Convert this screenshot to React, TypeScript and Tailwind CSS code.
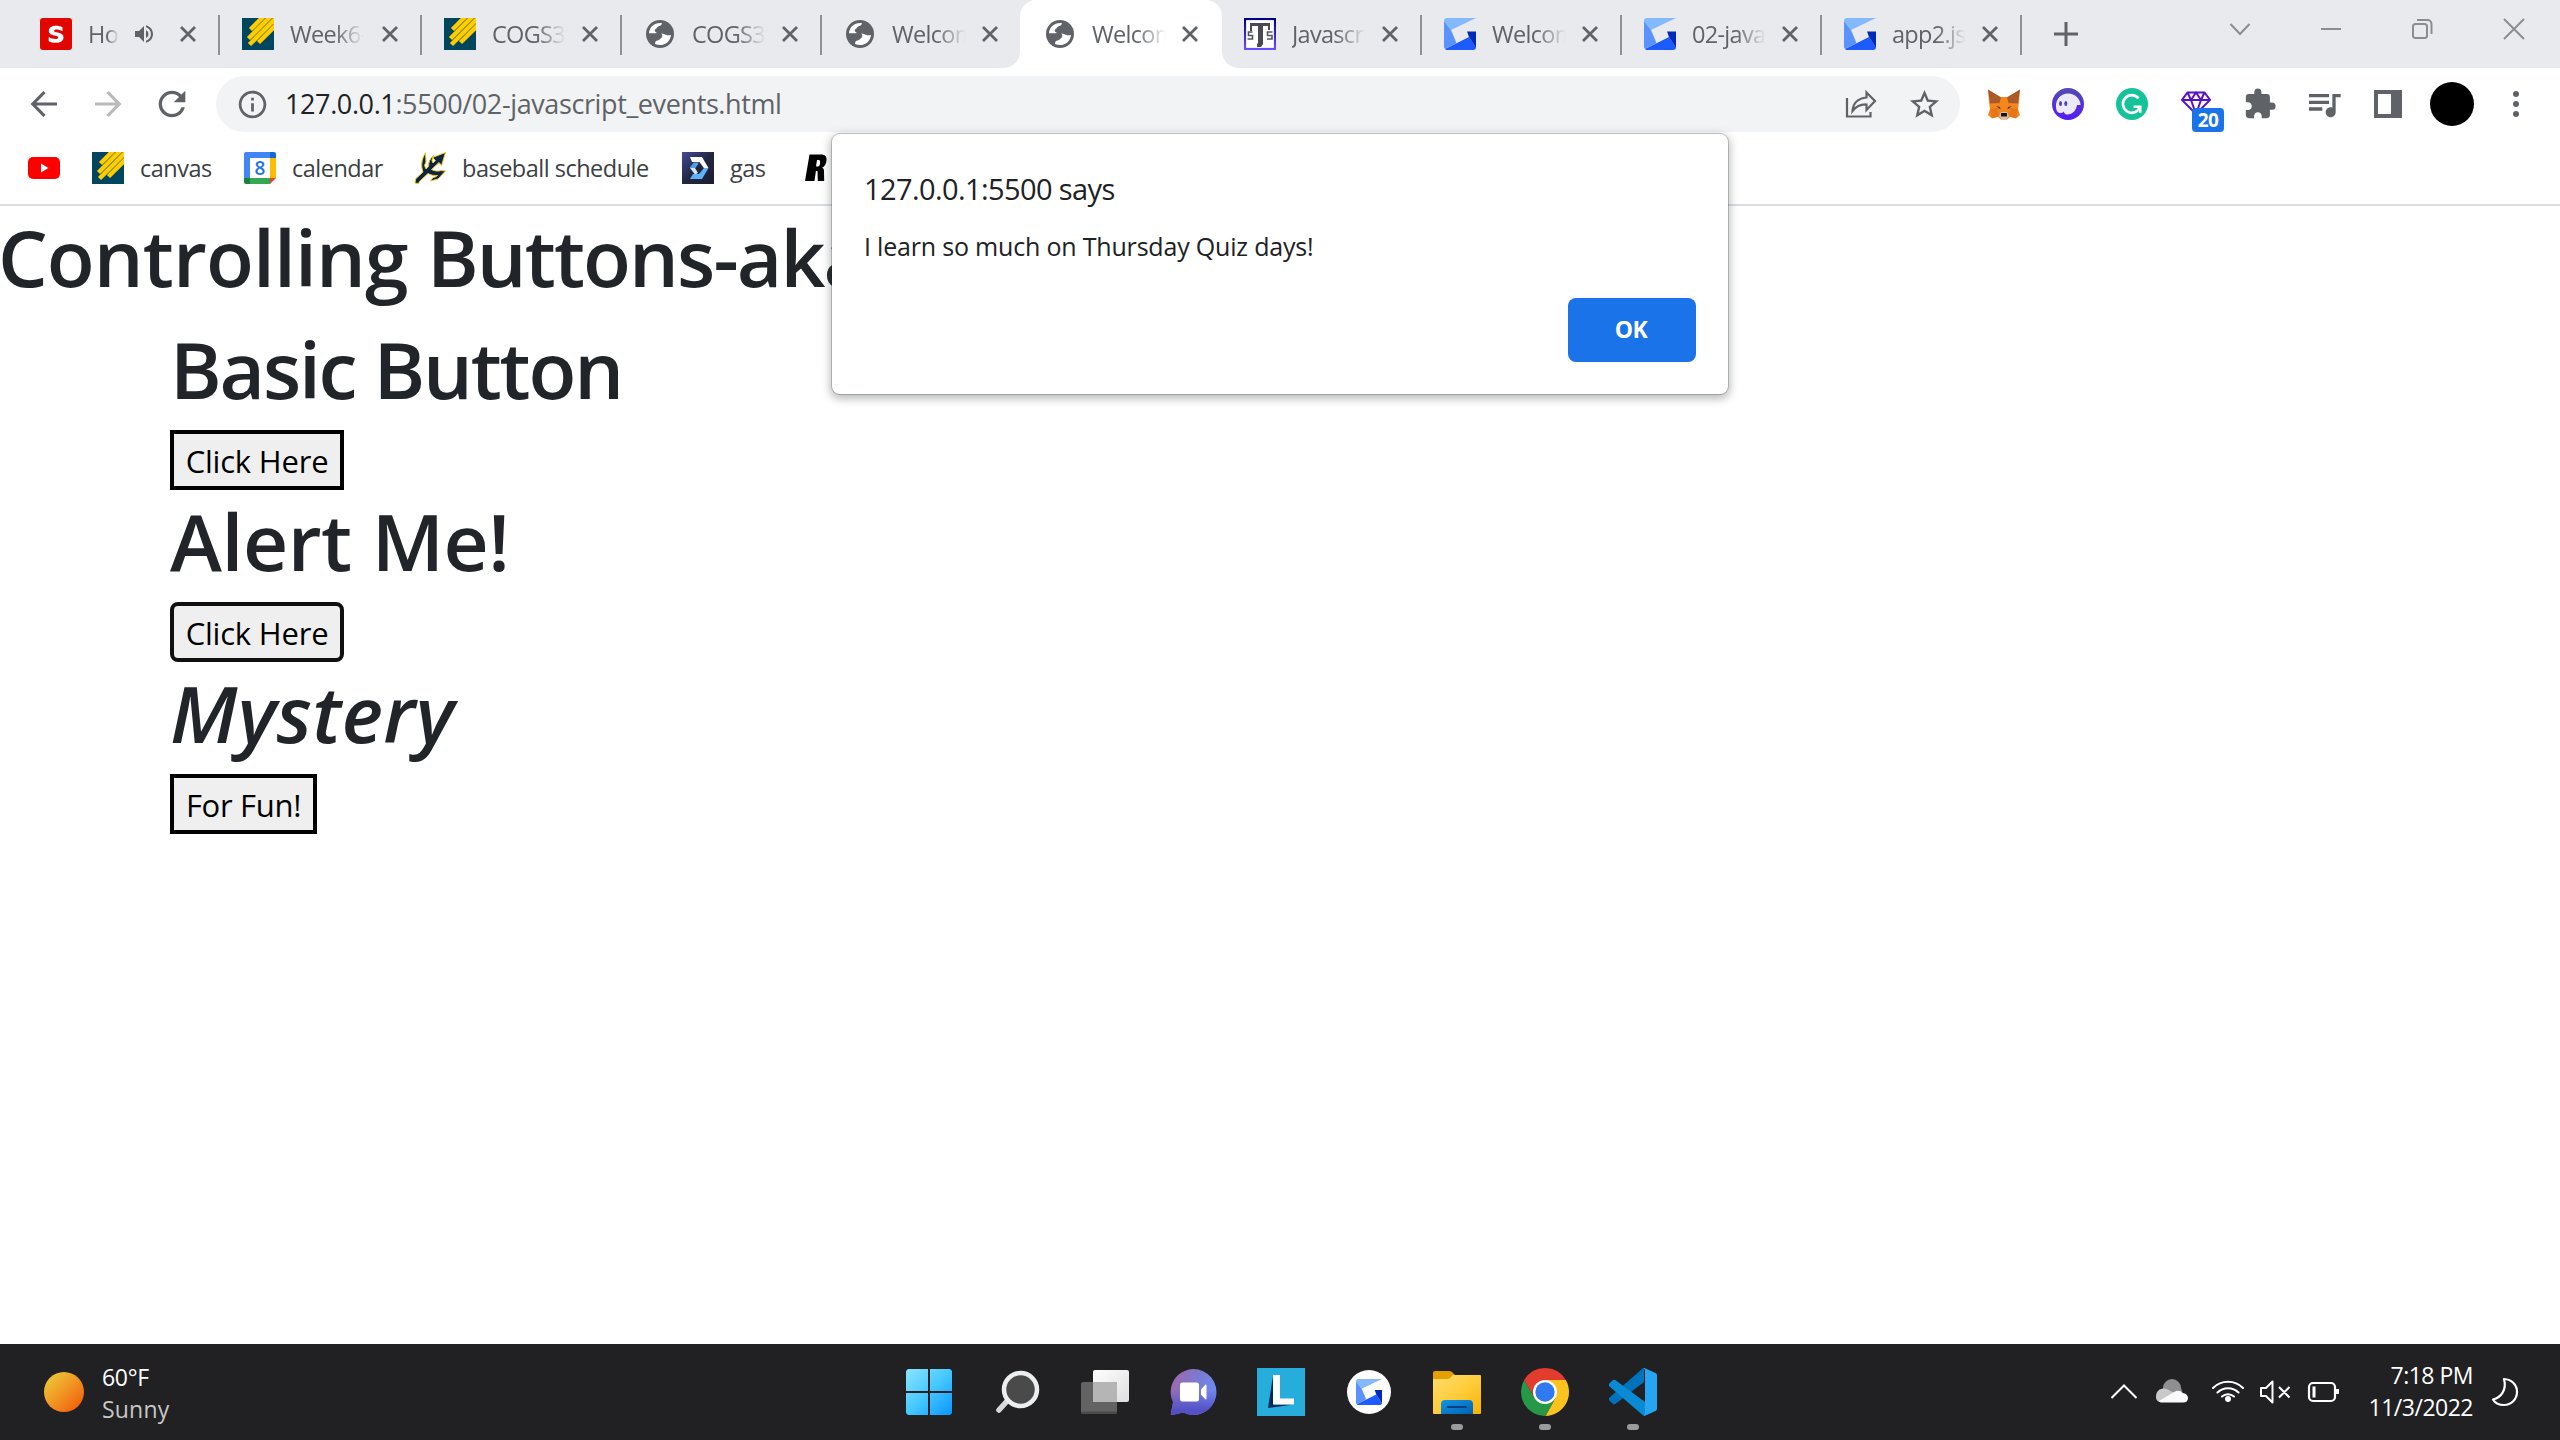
import React from 'react';
import { MdExtension, MdQueueMusic, MdStarBorder, MdRefresh, MdOutlineInfo, MdVolumeUp } from 'react-icons/md';

/* ---------- favicons ---------- */

function SFavicon() {
  return (
    <svg viewBox="0 0 32 32" className="size-8 shrink-0">
      <rect width="32" height="32" rx="3" fill="#e10600" />
      <path d="M22.5 9.3c-2-1-4.300-1.500-6.300-1.500-4.600 0-7.400 2-7.400 5 0 3.200 2.500 4 5.700 4.700 2.600.6 3.700.9 3.700 1.900s-1.100 1.500-2.900 1.500c-2.200 0-4.500-.7-6.600-1.900v4.300c2.100 1 4.400 1.500 6.900 1.500 5 0 7.900-2 7.900-5.300 0-2.900-2-4.100-5.700-4.900-2.700-.6-3.700-.8-3.700-1.700 0-.8.9-1.400 2.400-1.400 2 0 4 .6 6 1.700z" fill="#fff" />
    </svg>
  );
}

function CanvasLogo() {
  return (
    <svg viewBox="0 0 32 32" className="size-8 shrink-0">
      <rect width="32" height="32" fill="#00465e" />
      <g stroke="#ffcd00" strokeWidth="4.500">
        <path d="M8.500 11.500 22 -2" />
        <path d="M6.500 20.500 29 -2" />
        <path d="M7.500 26.500 35 -1" />
        <path d="M16.500 24.500 35 6" />
      </g>
    </svg>
  );
}

function Globe() {
  return (
    <svg viewBox="-2 -2 32 32" className="size-8 shrink-0">
      <circle cx="14" cy="14" r="14" fill="#5f6368" />
      <path d="M3 13.200C3.400 7.200 8.200 3 14 3c1 0 1.600.1 2 .3-.3 1.700-1.500 2.300-3.300 3-1.500.5-1.700 1.600-2.400 2.200-.9.800-1.700 1.200-1.500 2.200.2 1 1.300 1.700 2.200 2.200-2.500.4-4.500.3-8 .3z" fill="#fff" />
      <path d="M9 23.900c0-2 .6-3.300 2.800-3.500 1.700-.2 2.200-1.400 3.400-2.300 1.300-1 1.600-2.300.2-4.600 2.500-.2 3.800 1.500 5.400 1.700 1.500.2 3 .1 4.200-.3C24.500 20.500 19.800 25 14 25c-1.800 0-3.500-.4-5-1.100z" fill="#fff" />
    </svg>
  );
}

function ScalesFavicon() {
  return (
    <svg viewBox="0 0 32 32" className="size-8 shrink-0">
      <defs>
        <linearGradient id="scales" x1="0" y1="0" x2="0" y2="1">
          <stop offset="0" stopColor="#000084" />
          <stop offset="1" stopColor="#6a4dff" />
        </linearGradient>
      </defs>
      <rect x="1" y="1" width="30" height="30" fill="#fff" stroke="url(#scales)" strokeWidth="2.200" />
      <path d="M6 5h20v7h-2V8h-5v18l-2 3h-4v-3l1-1V8H8v5H6z" fill="#4a4a55" />
      <path d="M8.500 14H4.500v3.500h4V21h-5M28.500 14h-5v3.500h4.500V21h-5" fill="none" stroke="#55555f" strokeWidth="1.600" />
    </svg>
  );
}

function GLogo({ size = 'size-8' }: { size?: string }) {
  return (
    <svg viewBox="0 0 32 32" className={`${size} shrink-0`}>
      <path d="M3 0h29L7 12 0 3a3 3 0 0 1 3-3z" fill="#84b9ff" />
      <path d="M0 3 7 12l5.500 13L1 31a3 3 0 0 1-1-2z" fill="#5a93ff" />
      <path d="M12 25.500 25 19l7 11a3 3 0 0 1-3 2H2l-1-1z" fill="#1c5bff" />
      <path d="M23 13.500h9V30l-7-11z" fill="#0029b8" />
    </svg>
  );
}

/* ---------- tab strip ---------- */

function CloseGlyph() {
  return (
    <svg viewBox="0 0 16 16" className="size-4 shrink-0">
      <path d="M1 1l14 14M15 1L1 15" stroke="#5f6368" strokeWidth="2.800" />
    </svg>
  );
}

type TabProps = { icon: React.ReactNode; title: string; divider?: boolean; active?: boolean; audio?: boolean; wide?: boolean };

function Tab({ icon, title, divider, active, audio, wide }: TabProps) {
  return (
    <div
      className={`relative flex h-[68px] shrink-0 items-center pr-6 pl-[22px] ${wide ? 'w-[202px]' : 'w-[200px]'} ${
        active ? 'rounded-t-2xl bg-white shadow-[-2px_0_0_#fff]' : ''
      }`}
    >
      {active && (
        <>
          <span className="absolute bottom-0 -left-[18px] size-4 bg-[radial-gradient(circle_at_0_0,#e8eaed_15.500px,#fff_16px)]" />
          <span className="absolute -right-4 bottom-0 size-4 bg-[radial-gradient(circle_at_100%_0,#e8eaed_15.500px,#fff_16px)]" />
        </>
      )}
      {icon}
      <span
        className={`ml-4 ${audio ? 'w-[31px]' : 'w-[74px]'} overflow-hidden [mask-image:linear-gradient(to_right,#000_60%,transparent)] text-[23.500px] leading-[66px] tracking-[-0.700px] whitespace-nowrap text-[#5f6368]`}
      >
        {title}
      </span>
      {audio && <MdVolumeUp className="ml-[13px] size-6 shrink-0 text-[#5f6368]" />}
      <span className="ml-auto flex">
        <CloseGlyph />
      </span>
      {divider && <span className="absolute top-[15px] right-0 h-10 w-0.5 bg-[#8d9196]" />}
    </div>
  );
}

function TabStrip() {
  return (
    <div className="flex h-[68px] bg-[#e8eaed] pl-[18px]">
      <Tab icon={<SFavicon />} title="Ho" audio divider wide />
      <Tab icon={<CanvasLogo />} title="Week6-" divider wide />
      <Tab icon={<CanvasLogo />} title="COGS3" divider />
      <Tab icon={<Globe />} title="COGS3" divider />
      <Tab icon={<Globe />} title="Welcome" />
      <Tab icon={<Globe />} title="Welcome" active />
      <Tab icon={<ScalesFavicon />} title="Javascript" divider />
      <Tab icon={<GLogo />} title="Welcome" divider />
      <Tab icon={<GLogo />} title="02-javas" divider />
      <Tab icon={<GLogo />} title="app2.js" divider />
      <svg viewBox="0 0 24 24" className="mt-[22px] ml-8 size-6 shrink-0">
        <path d="M12 0v24M0 12h24" stroke="#5f6368" strokeWidth="3" />
      </svg>
      <div className="mt-[18px] mr-[35px] ml-auto flex h-[22px] items-center gap-[70px]">
        <svg viewBox="0 0 22 22" fill="none" stroke="#8b8d90" strokeWidth="2" className="size-[22px]">
          <path d="M1.500 6l9.500 10 9.500-10" />
        </svg>
        <svg viewBox="0 0 20 22" fill="none" stroke="#8b8d90" strokeWidth="2" className="h-[22px] w-5">
          <path d="M0 11h20" />
        </svg>
        <svg viewBox="0 0 22 22" fill="none" stroke="#8b8d90" strokeWidth="2" className="size-[22px]">
          <rect x="2" y="6" width="14" height="14" rx="2.500" />
          <path d="M6 2h10.500a4 4 0 0 1 4 4v10" />
        </svg>
        <svg viewBox="0 0 22 22" fill="none" stroke="#8b8d90" strokeWidth="2" className="size-[22px]">
          <path d="M1 1l20 20M21 1L1 21" />
        </svg>
      </div>
    </div>
  );
}

/* ---------- toolbar ---------- */

function ArrowIcon({ flip }: { flip?: boolean }) {
  return (
    <svg viewBox="0 0 32 32" fill="none" stroke={flip ? '#bababa' : '#5f6368'} strokeWidth="3.200" className={`size-8 shrink-0 ${flip ? '-scale-x-100' : ''}`}>
      <path d="M29 16H5M16.500 4 4.800 16l11.700 12" />
    </svg>
  );
}

function ShareIcon() {
  return (
    <svg viewBox="0 0 32 32" fill="none" stroke="#5f6368" strokeWidth="2.200" className="size-8">
      <path d="M2 10v18.500h23.500V24" />
      <path d="M21.500 4.500 30 13l-8.500 9v-5.500c-6-.3-10.500 2-14 6.500.5-7.500 5-12.500 14-13.500z" />
    </svg>
  );
}

function FoxIcon() {
  return (
    <svg viewBox="0 0 32 32" className="size-8 shrink-0">
      <path d="M0 1.500 12.500 9h7L32 1.500 31 14l-1 7 2 6-4 3.500-6-1.500-3 2.500h-6L10 29l-6 1.500L0 27l2-6-1-7z" fill="#f6851b" />
      <path d="M0 1.500 13 9.500 11.500 15 2 15.500zM32 1.500 19 9.500 20.500 15 30 15.500z" fill="#aa5a2a" />
      <path d="M2 21l8-1 1 8-7 2zM30 21l-8-1-1 8 7 2z" fill="#e4761b" />
      <path d="M11 28l2-4h6l2 4-3 3.500h-4z" fill="#d7c1b3" />
      <path d="M13 25h6v3.500h-6z" fill="#161616" />
      <path d="M8 18l4 1 .5 2.500zM24 18l-4 1-.5 2.500z" fill="#3a3f4a" />
    </svg>
  );
}

function GhostIcon() {
  return (
    <svg viewBox="0 0 32 32" className="size-8 shrink-0">
      <defs>
        <linearGradient id="ghost" x1="0" y1="0" x2="0" y2="1">
          <stop offset="0" stopColor="#534bb1" />
          <stop offset="1" stopColor="#551bf9" />
        </linearGradient>
      </defs>
      <circle cx="16" cy="16" r="16" fill="url(#ghost)" />
      <path d="M4 19C3.500 11 9 5.500 16 5.500S28.500 11 28.500 17H25c-.5 5-4.500 9.500-9.500 9.500-3 0-3.500-2-3.500-3-1.500 1.500-3 1.800-4.500 1.500C5 24.500 4.200 22 4 19z" fill="#ece9fa" />
      <ellipse cx="8.500" cy="15.500" rx="1.500" ry="2.600" fill="#4b41b0" />
      <ellipse cx="13.800" cy="15.500" rx="1.500" ry="2.600" fill="#4b41b0" />
    </svg>
  );
}

function GrammarIcon() {
  return (
    <svg viewBox="0 0 32 32" className="size-8 shrink-0">
      <circle cx="16" cy="16" r="16" fill="#15c39a" />
      <path d="M22.500 10.300A8.800 8.800 0 1 0 23.800 19.500" fill="none" stroke="#fff" strokeWidth="2.700" />
      <path d="M17.500 18.700h6.800v6" fill="none" stroke="#fff" strokeWidth="2.500" />
    </svg>
  );
}

function GemIcon() {
  return (
    <div className="relative size-8 shrink-0">
      <svg viewBox="0 0 32 32" fill="none" stroke="#5a0fc8" strokeWidth="2" className="size-8">
        <path d="M7.500 4.500h17L30 12 16 26 2 12zM2 12h28M7.500 4.500 11 12l5-7.500 5 7.500 3.500-7.500M11 12l5 14 5-14" />
      </svg>
      <span className="absolute top-5 left-3 flex h-6 w-8 items-center justify-center rounded bg-[#1a73e8] text-[19px] leading-6 font-bold tracking-[-0.500px] text-white">
        20
      </span>
    </div>
  );
}

function Toolbar() {
  return (
    <div className="flex h-[72px] items-center pl-7">
      <div className="flex items-center gap-8">
        <ArrowIcon />
        <ArrowIcon flip />
        <span className="flex size-8 items-center justify-center">
          <MdRefresh className="size-10 shrink-0 text-[#5f6368]" />
        </span>
      </div>
      <div className="ml-7 flex h-14 w-[1744px] shrink-0 items-center rounded-full bg-[#f1f3f4] pr-5 pl-5">
        <MdOutlineInfo className="size-[33px] shrink-0 text-[#5f6368]" />
        <span className="ml-4 text-[27px] tracking-[-0.390px] text-[#5f6368]">
          <span className="text-[#202124]">127.0.0.1</span>:5500/02-javascript_events.html
        </span>
        <div className="ml-auto flex items-center gap-[31px]">
          <ShareIcon />
          <span className="flex size-8 items-center justify-center">
            <MdStarBorder className="size-[35px] shrink-0 text-[#5f6368]" />
          </span>
        </div>
      </div>
      <div className="ml-7 flex items-center gap-8">
        <FoxIcon />
        <GhostIcon />
        <GrammarIcon />
        <GemIcon />
        <span className="flex size-8 items-center justify-center">
          <MdExtension className="size-[34px] shrink-0 text-[#5f6368]" />
        </span>
        <span className="flex size-8 items-center justify-center">
          <MdQueueMusic className="size-10 shrink-0 text-[#5f6368]" />
        </span>
        <svg viewBox="0 0 32 32" className="size-8 shrink-0">
          <path d="M2 2h28v28H2zM6 6v20h13V6z" fill="#5f6368" fillRule="evenodd" />
        </svg>
      </div>
      <div className="ml-[26px] size-11 rounded-full bg-black" />
      <svg viewBox="0 0 32 32" fill="#5f6368" className="ml-[26px] size-8">
        <circle cx="16" cy="6" r="3" />
        <circle cx="16" cy="16" r="3" />
        <circle cx="16" cy="26" r="3" />
      </svg>
    </div>
  );
}

/* ---------- bookmarks ---------- */

function CalendarIcon() {
  return (
    <div className="flex size-8 shrink-0">
      <svg viewBox="0 0 32 32" className="size-8">
        <path d="M2 0h24v6H6v20H0V2a2 2 0 0 1 2-2z" fill="#4285f4" />
        <path d="M26 0h4a2 2 0 0 1 2 2v4h-6z" fill="#1967d2" />
        <path d="M26 6h6v20h-6z" fill="#fbbc04" />
        <path d="M6 26h20v6H6z" fill="#34a853" />
        <path d="M0 26h6v6H2a2 2 0 0 1-2-2z" fill="#188038" />
        <path d="M26 26h6l-6 6z" fill="#ea4335" />
        <path d="M6 6h20v20H6z" fill="#fff" />
      </svg>
      <span className="-ml-8 w-8 text-center text-[19px] leading-8 font-semibold text-[#1a73e8]">8</span>
    </div>
  );
}

function TridentIcon() {
  return (
    <svg viewBox="0 0 32 32" className="size-8 shrink-0" strokeLinejoin="round">
      <path
        d="M31.500.5 27.500 13.500 25 10.500 17.500 17.500c3.500 1.800 6.500 2 9.500 1l4.500.5-7.500 8-7.500 2 2.500-3.500c2-.2 3.500-.8 4.500-2-3.500.4-7-.5-9.500-2L5.500 29.500 4.500 31.500 1 31l.5-4L9 20C7 14.500 7 8 11.500.8L12 10l-1.500 3.500L12 17l2.500-2.500C14.500 10 16 6.500 19.500 3.500L18 8.500l1 2.500 2.500-2.500-3-3z"
        fill="#0b2545"
        stroke="#f2c81e"
        strokeWidth="1"
      />
    </svg>
  );
}

function HexIcon() {
  return (
    <svg viewBox="0 0 32 32" className="size-8 shrink-0">
      <defs>
        <linearGradient id="hexbg" x1="0" y1="0" x2="1" y2="1">
          <stop offset="0" stopColor="#434a99" />
          <stop offset=".5" stopColor="#23263f" />
          <stop offset="1" stopColor="#1b1e30" />
        </linearGradient>
      </defs>
      <rect width="32" height="32" fill="url(#hexbg)" />
      <path d="M8 5h12l6.500 11-4 1-5-7H10z" fill="#fff" />
      <path d="M8 16l4-5 4 1-3 4 3 5-3 1.500z" fill="#d4e8fb" />
      <path d="M7.500 16 12 10.500h5L13 16z" fill="#4b9ff0" />
      <path d="M26.500 16 20 27H8l3-5h6l5-6z" fill="#5bb2fb" />
    </svg>
  );
}

function Bookmark({ icon, label }: { icon: React.ReactNode; label: string }) {
  return (
    <div className="flex items-center">
      {icon}
      <span className="ml-4 text-[23.500px] leading-[54px] tracking-[-0.500px] text-[#3c4043]">{label}</span>
    </div>
  );
}

function BookmarksBar() {
  return (
    <div className="flex h-[66px] items-start border-b-2 border-[#dadce0] pl-7">
      <div className="flex h-14 items-center">
        <svg viewBox="0 0 32 32" className="size-8">
          <rect y="5" width="32" height="22" rx="5" fill="#f00" />
          <path d="M13 11.500 20.500 16 13 20.500z" fill="#fff" />
        </svg>
      </div>
      <div className="flex h-14 items-center pl-8">
        <div className="w-[152px]">
          <Bookmark icon={<CanvasLogo />} label="canvas" />
        </div>
        <div className="w-[170px]">
          <Bookmark icon={<CalendarIcon />} label="calendar" />
        </div>
        <div className="w-[268px]">
          <Bookmark icon={<TridentIcon />} label="baseball schedule" />
        </div>
        <div className="w-[122px]">
          <Bookmark icon={<HexIcon />} label="gas" />
        </div>
        <svg viewBox="0 0 24 30" className="h-[30px] w-6">
          <path d="M5.500 1.500H17c4 0 6 2 5.500 6-.4 3.700-1.800 6-4.500 7.300 1.600.6 2 1.700 2 3.700l.2 9.500h-6.400l-.3-10h-1.600L10.500 28H1zM13 7l-1 6.500h1.800c1.300 0 2-.9 2.300-3.300C16.400 8 16 7 14.700 7z" fill="#000" fillRule="evenodd" />
        </svg>
      </div>
    </div>
  );
}

/* ---------- page ---------- */

const heading = 'h-24 pt-[3px] text-[78.500px] leading-[96px] font-semibold text-[#212529] whitespace-nowrap';

function PageContent() {
  return (
    <main className="h-[1138px] bg-white">
      <h1 className={`${heading} -ml-0.5`}>
        <span className="tracking-[-0.900px]">Controlling </span>
        <span className="tracking-[-1.900px]">Buttons-aka</span>
      </h1>
      <div className="flex flex-col items-start gap-4 pt-4 pl-[170px]">
        <h1 className={`${heading} tracking-[-2.200px]`}>Basic Button</h1>
        <button className="h-[60px] w-[174px] border-4 border-black bg-[#efefef] text-[31px] leading-[52px] tracking-[-0.200px] text-black">
          <span className="relative top-px">Click Here</span>
        </button>
      </div>
      <div className="flex flex-col items-start gap-4 pl-[170px]">
        <h1 className={`${heading} tracking-[-0.450px]`}>Alert Me!</h1>
        <button className="h-[60px] w-[174px] rounded-lg border-4 border-[#101010] bg-[#efefef] text-[31px] leading-[52px] tracking-[-0.200px] text-black">
          <span className="relative top-px">Click Here</span>
        </button>
      </div>
      <div className="flex flex-col items-start gap-4 pl-[170px]">
        <h1 className={`${heading} tracking-[0.300px] italic`}>Mystery</h1>
        <button className="h-[60px] w-[147px] border-4 border-black bg-[#efefef] text-[31px] leading-[52px] tracking-[-0.300px] text-black">
          <span className="relative top-px">For Fun!</span>
        </button>
      </div>
    </main>
  );
}

function AlertDialog() {
  return (
    <div className="absolute top-[134px] left-[832px] flex h-[260px] w-[896px] flex-col rounded-lg bg-white px-8 pt-8 pb-8 shadow-[0_0_0_1px_rgba(0,0,0,0.18),0_3px_8px_2px_rgba(60,64,67,0.35)]">
      <div className="text-[29px] leading-[46px] tracking-[-0.600px] text-[#202124]">127.0.0.1:5500 says</div>
      <div className="mt-[9px] text-[25px] leading-[50px] tracking-[-0.190px] text-[#202124]">I learn so much on Thursday Quiz days!</div>
      <button className="mt-auto h-16 w-32 self-end rounded-lg bg-[#1a73e8] pr-0.5 pb-0.5 text-[23px] leading-[62px] font-bold tracking-[-0.500px] text-white">
        OK
      </button>
    </div>
  );
}

/* ---------- taskbar ---------- */

function WindowsIcon() {
  return (
    <svg viewBox="0 0 46 46" className="size-[46px]">
      <defs>
        <linearGradient id="win" gradientUnits="userSpaceOnUse" x1="0" y1="0" x2="46" y2="46">
          <stop offset="0" stopColor="#8be4ff" />
          <stop offset=".5" stopColor="#46c8ff" />
          <stop offset="1" stopColor="#0a95ff" />
        </linearGradient>
      </defs>
      <path d="M2 0h20v22H0V2zM24 0h20l2 2v20H24zM0 24h22v22H2l-2-2zM24 24h22v20l-2 2H24z" fill="url(#win)" />
    </svg>
  );
}

function SearchIcon() {
  return (
    <svg viewBox="0 0 48 48" className="size-12">
      <path d="M15 32 6 42" stroke="#d6dadc" strokeWidth="5.500" strokeLinecap="round" />
      <circle cx="27.500" cy="21.500" r="16.500" fill="#4a4a4b" stroke="#eceeef" strokeWidth="4.500" />
    </svg>
  );
}

function TaskViewIcon() {
  return (
    <svg viewBox="0 0 48 48" className="size-12">
      <defs>
        <linearGradient id="tv" x1="0" y1="0" x2="1" y2="1">
          <stop offset="0" stopColor="#fff" />
          <stop offset="1" stopColor="#dedede" />
        </linearGradient>
      </defs>
      <rect x="12" y="2" width="36" height="32" rx="2" fill="url(#tv)" />
      <rect x="0" y="14" width="36" height="32" rx="2" fill="#636363" />
      <path d="M12 14h22a2 2 0 0 1 2 2v18H12z" fill="#b5b5b5" />
      <path d="M0 43.500h36V44a2 2 0 0 1-2 2H2a2 2 0 0 1-2-2z" fill="#4a4a4a" />
    </svg>
  );
}

function ChatIcon() {
  return (
    <svg viewBox="0 0 48 48" className="size-12">
      <defs>
        <linearGradient id="chat" x1="0" y1=".2" x2="1" y2=".6">
          <stop offset="0" stopColor="#a067a8" />
          <stop offset=".5" stopColor="#7a7ad0" />
          <stop offset="1" stopColor="#6c8df5" />
        </linearGradient>
        <linearGradient id="chat2" x1="0" y1="0" x2="0" y2="1">
          <stop offset=".45" stopColor="#5452c8" stopOpacity="0" />
          <stop offset=".9" stopColor="#5450c6" />
        </linearGradient>
      </defs>
      <path d="M24 1a23 23 0 1 1-10 43.500L3.500 47c-1.500.3-2-.5-1.500-2l2-11A23 23 0 0 1 24 1z" fill="url(#chat)" />
      <path d="M24 1a23 23 0 1 1-10 43.500L3.500 47c-1.500.3-2-.5-1.500-2l2-11A23 23 0 0 1 24 1z" fill="url(#chat2)" />
      <rect x="11" y="14.500" width="19" height="19" rx="2.500" fill="#fff" />
      <path d="M32 21.500 36 17c.8-.8 1.500-.5 1.500.6v12.800c0 1.100-.7 1.400-1.500.6l-4-4.500z" fill="#fff" />
    </svg>
  );
}

function LIcon() {
  return (
    <svg viewBox="0 0 48 48" className="size-12">
      <rect width="48" height="48" fill="#26addb" />
      <path d="M16 8 11 40l26-3.500H17z" fill="#002a5c" />
      <path d="M16 7h7v23.500h14V36.500H16z" fill="#fff" />
    </svg>
  );
}

function FolderIcon() {
  return (
    <svg viewBox="0 0 48 48" className="size-12">
      <defs>
        <linearGradient id="fold" x1="0" y1="0" x2="1" y2="1">
          <stop offset="0" stopColor="#ffdc6b" />
          <stop offset=".5" stopColor="#ffcd3c" />
          <stop offset="1" stopColor="#f9b100" />
        </linearGradient>
        <linearGradient id="tray" x1="0" y1="0" x2="1" y2="1">
          <stop offset="0" stopColor="#1695dd" />
          <stop offset="1" stopColor="#0062b5" />
        </linearGradient>
      </defs>
      <path d="M0 5a2 2 0 0 1 2-2h14c2 0 3 .7 4 2l3 3v6H0z" fill="#e2a100" />
      <path d="M0 11h14c2 0 3-1 4-2l2-2h27a1 1 0 0 1 1 1v37a1 1 0 0 1-1 1H1a1 1 0 0 1-1-1z" fill="url(#fold)" />
      <path d="M8 46V36a4 4 0 0 1 4-4h24a4 4 0 0 1 4 4v10z" fill="url(#tray)" />
      <path d="M15 39h18" stroke="#0d3f83" strokeWidth="2" strokeLinecap="round" />
    </svg>
  );
}

function ChromeIcon() {
  return (
    <svg viewBox="0 0 48 48" className="size-12">
      <path d="M24 0a24 24 0 0 1 20.800 12H24L13.600 30 3.200 12A24 24 0 0 1 24 0z" fill="#e33b2e" />
      <path d="M44.800 12A24 24 0 0 1 24.500 48l9.900-18L24 12z" fill="#fcc31e" />
      <path d="M24.500 48A24 24 0 0 1 3.200 12l10.400 18 20.800 0z" fill="#279847" />
      <circle cx="24" cy="24" r="12" fill="#fff" />
      <circle cx="24" cy="24" r="9.700" fill="#3079ee" />
    </svg>
  );
}

function CodeIcon() {
  return (
    <svg viewBox="0 0 48 48" className="size-12">
      <path d="M35 0v14L7 35.500a3 3 0 0 1-3.500 0L.8 33a2.500 2.500 0 0 1 0-3.700L33 1z" fill="#0072ba" />
      <path d="M.8 18.700a2.500 2.500 0 0 1 0-3.700l2.700-2.500a3 3 0 0 1 3.500 0L36 34v14l-3-1.500z" fill="#0a8ad2" />
      <path d="M33.500 47.500c1.200.7 2 .6 3 0L46.500 43A2.600 2.600 0 0 0 48 40.500V7.500A2.600 2.600 0 0 0 46.500 5L36.500.4c-1-.5-2-.5-3 .2 1.500-.5 2.500.5 2.500 2V45c0 1.700-1 3-2.500 2.500z" fill="#26a5f2" />
    </svg>
  );
}

function TaskItem({ children, running }: { children: React.ReactNode; running?: boolean }) {
  return (
    <div className="flex h-24 w-[88px] flex-col items-center pt-6">
      <div className="flex size-12 items-center justify-center">{children}</div>
      {running && <span className="mt-2 h-1.5 w-3 rounded-full bg-[#9b9b9b]" />}
    </div>
  );
}

function Tray() {
  return (
    <div className="flex h-24 items-center">
      <svg viewBox="0 0 28 28" fill="none" stroke="#fff" strokeWidth="2" className="size-7">
        <path d="M1.500 20 14 7.500 26.500 20" />
      </svg>
      <svg viewBox="0 0 32 32" className="ml-[18px] size-8">
        <path d="M7 12a9 9 0 0 1 18 0l2 6H6z" fill="#8f8f8f" />
        <path d="M0 21c0-5 3-8.500 7.500-8.500 3 0 4.500 1 8 3L27 20v6H5c-3 0-5-2-5-5z" fill="#c9c9c9" />
        <path d="M3 25 19 15.500c2.500-1.300 6-.8 7.500 1.500 3.500.3 5.500 2.500 5.500 5 0 3-2 4.500-5 4.500H6c-1.500 0-2.500-.5-3-1.500z" fill="#fafafa" />
      </svg>
      <svg viewBox="0 0 32 24" fill="none" stroke="#fff" strokeWidth="2.100" strokeLinecap="round" className="-mt-1 ml-6 h-6 w-8">
        <path d="M1 10a21 21 0 0 1 30 0M5.500 14.500a15 15 0 0 1 21 0M10 18.500a9 9 0 0 1 12 0" />
        <circle cx="16" cy="21" r="2" fill="#fff" />
      </svg>
      <svg viewBox="0 0 32 24" fill="none" stroke="#fff" strokeWidth="2" strokeLinejoin="round" className="ml-[15px] h-6 w-8">
        <path d="M2 8h5l6.500-6.500v21L7 16H2zM20 7l10.500 10.500M30.500 7 20 17.500" />
      </svg>
      <svg viewBox="0 0 34 24" fill="none" stroke="#fff" strokeWidth="2.200" className="ml-4 h-6 w-[34px]">
        <rect x="2" y="3" width="26" height="18" rx="4" />
        <rect x="5.500" y="6.500" width="3" height="11" fill="#fff" stroke="none" />
        <path d="M29 9h3v5h-3z" fill="#fff" stroke="none" />
      </svg>
      <div className="ml-[26px] w-[106px] pb-0.5 text-right text-[23px] leading-8 tracking-[-0.500px] text-white">
        <div>7:18 PM</div>
        <div>11/3/2022</div>
      </div>
      <svg viewBox="0 0 28 30" fill="none" stroke="#fff" strokeWidth="2.200" strokeLinejoin="round" className="ml-[18px] h-[30px] w-7">
        <path d="M13 2c8 .5 13 6 13 13a13 13 0 0 1-13 13c-5 0-9-2-11-5.500C10 20.500 16 13 13 2z" />
      </svg>
    </div>
  );
}

function Taskbar() {
  return (
    <div className="flex h-24 bg-[#212123]">
      <div className="flex w-[885px] items-center pl-11">
        <span className="size-10 rounded-full bg-linear-to-br from-[#ecc035] from-15% to-[#f0640d] to-85%" />
        <div className="ml-[18px] pt-0.5 text-[23px] leading-8 text-white">
          <div className="tracking-[-0.300px]">60°F</div>
          <div className="tracking-[0.200px] text-[#c8c8c8]">Sunny</div>
        </div>
      </div>
      <div className="flex">
        <TaskItem>
          <WindowsIcon />
        </TaskItem>
        <TaskItem>
          <SearchIcon />
        </TaskItem>
        <TaskItem>
          <TaskViewIcon />
        </TaskItem>
        <TaskItem>
          <ChatIcon />
        </TaskItem>
        <TaskItem>
          <LIcon />
        </TaskItem>
        <TaskItem>
          <span className="flex size-11 items-center justify-center rounded-full bg-white">
            <GLogo size="size-[26px]" />
          </span>
        </TaskItem>
        <TaskItem running>
          <FolderIcon />
        </TaskItem>
        <TaskItem running>
          <ChromeIcon />
        </TaskItem>
        <TaskItem running>
          <CodeIcon />
        </TaskItem>
      </div>
      <div className="mr-[41px] ml-auto">
        <Tray />
      </div>
    </div>
  );
}

export default function App() {
  return (
    <div className="relative h-[1440px] w-[2560px] overflow-hidden bg-white font-['Open_Sans','Noto_Sans',sans-serif]">
      <TabStrip />
      <Toolbar />
      <BookmarksBar />
      <PageContent />
      <Taskbar />
      <AlertDialog />
    </div>
  );
}
